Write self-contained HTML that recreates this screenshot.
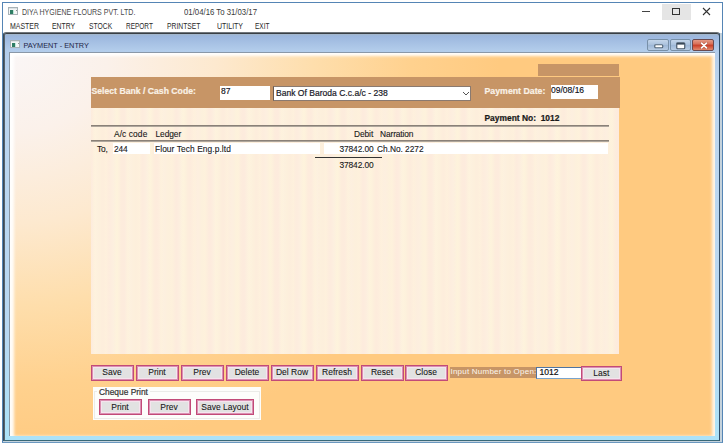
<!DOCTYPE html>
<html><head><meta charset="utf-8">
<style>
*{margin:0;padding:0;box-sizing:border-box}
html,body{width:724px;height:445px;overflow:hidden;background:#fff;font-family:"Liberation Sans",sans-serif;position:relative}
.a{position:absolute;white-space:nowrap}
.t{position:absolute;white-space:nowrap;line-height:1;-webkit-text-stroke:.2px currentColor}
/* outer window */
#ow{left:2px;top:2px;width:721px;height:441px;border:1px solid #5585b5;border-bottom-color:#6a98c0;background:#fff}
#ow2{left:3px;top:33px;width:719px;height:409px;background:#c4d2dc}
/* mdi */
#mdi{left:3px;top:32px;width:717px;height:409px;border:1px solid #70767c;border-left-color:#3a4a58;border-right-color:#2e4a66;border-bottom-color:#386878;background:linear-gradient(#a4b6c8,#a4b6c8 1px,#9cb7de 3px,#b3cdeb 18px,#bcd5ef 60px,#b8d8f2 300px,#ace2f8 405px);border-radius:3px 3px 0 0;box-shadow:inset 1px 0 0 #56626c,inset 0 1px 0 #3a3f44}
#cnt{left:9px;top:52px;width:706px;height:384px;border-left:1px solid #8a96a4;border-top:1px solid #8a98a8;overflow:hidden}
#bg{left:0;top:0;width:705px;height:383px;background:radial-gradient(ellipse 490px 405px at 0 0,#faf6f6 0%,#fbf1ea 20%,#fde9cf 42%,#fedeac 62%,#ffd18e 82%,#ffca80 100%)}
#glow{left:0;top:0;width:705px;height:383px;box-shadow:inset 4px 3px 3px rgba(255,255,255,.95),inset -3px 0 3px rgba(255,255,255,.8)}
.btn{position:absolute;height:16px;width:43px;background:#e2e2e2;border:1px solid #c24a78;box-shadow:inset 0 0 0 1px #da90b2,inset 0 0 0 2px #f6e4ee;font-size:8.5px;color:#181818;text-align:center;line-height:13.2px;-webkit-text-stroke:0.08px #181818}
.mb{position:absolute;top:39px;height:12px;border:1px solid #7890a8;border-radius:2px;background:linear-gradient(#c4d6ea,#a9c0dc 50%,#9cb6d6 51%,#b8cce4)}
</style></head><body>
<div class="a" id="ow"></div>
<div class="a" id="ow2"></div>
<!-- title -->
<svg class="a" style="left:8px;top:7px" width="10" height="8"><rect x=".5" y=".5" width="9" height="7" fill="#f4f6f6" stroke="#a8b2b6"/><rect x="1" y="1" width="8" height="1" fill="#dde2e4"/><rect x="2" y="3" width="3" height="4" fill="#2f7d64"/><rect x="5" y="3" width="1" height="4" fill="#bfe8d8"/><rect x="8" y="3" width="1" height="1" fill="#8a9490"/></svg>
<div class="t" style="left:21.7px;top:7.6px;font-size:8.4px;color:#4a4a4a;-webkit-text-stroke:0;transform:scaleX(.842);transform-origin:0 0">DIYA HYGIENE FLOURS PVT. LTD.</div>
<div class="t" style="left:184px;top:7.6px;font-size:8.4px;color:#3a3a3a;-webkit-text-stroke:0;transform:scaleX(.929);transform-origin:0 0">01/04/16 To 31/03/17</div>
<div class="a" style="left:642px;top:11px;width:8px;height:1px;background:#444"></div>
<div class="a" style="left:662px;top:4px;width:29px;height:16px;background:#e5e5e5"></div>
<div class="a" style="left:672px;top:7.5px;width:8px;height:7px;border:1px solid #333"></div>
<svg class="a" style="left:702px;top:7px" width="9" height="9"><path d="M1 1L8 8M8 1L1 8" stroke="#333" stroke-width="1.1" fill="none"/></svg>
<!-- menu -->
<div class="t" style="left:9.7px;top:22.1px;font-size:8.4px;color:#2a2a2a;-webkit-text-stroke:0;transform:scaleX(0.829);transform-origin:0 0">MASTER</div>
<div class="t" style="left:52.2px;top:22.1px;font-size:8.4px;color:#2a2a2a;-webkit-text-stroke:0;transform:scaleX(0.819);transform-origin:0 0">ENTRY</div>
<div class="t" style="left:89.4px;top:22.1px;font-size:8.4px;color:#2a2a2a;-webkit-text-stroke:0;transform:scaleX(0.806);transform-origin:0 0">STOCK</div>
<div class="t" style="left:126.1px;top:22.1px;font-size:8.4px;color:#2a2a2a;-webkit-text-stroke:0;transform:scaleX(0.772);transform-origin:0 0">REPORT</div>
<div class="t" style="left:166.7px;top:22.1px;font-size:8.4px;color:#2a2a2a;-webkit-text-stroke:0;transform:scaleX(0.806);transform-origin:0 0">PRINTSET</div>
<div class="t" style="left:216.9px;top:22.1px;font-size:8.4px;color:#2a2a2a;-webkit-text-stroke:0;transform:scaleX(0.835);transform-origin:0 0">UTILITY</div>
<div class="t" style="left:254.7px;top:22.1px;font-size:8.4px;color:#2a2a2a;-webkit-text-stroke:0;transform:scaleX(0.777);transform-origin:0 0">EXIT</div>
<!-- mdi -->
<div class="a" id="mdi"></div>
<svg class="a" style="left:10px;top:40px" width="10" height="8"><rect x=".5" y=".5" width="9" height="7" fill="#f4f6f6" stroke="#a8b2b6"/><rect x="1" y="1" width="8" height="1" fill="#dde2e4"/><rect x="2" y="3" width="3" height="4" fill="#2f7d64"/><rect x="5" y="3" width="1" height="4" fill="#bfe8d8"/><rect x="8" y="3" width="1" height="1" fill="#8a9490"/></svg>
<div class="t" style="left:23.5px;top:41.5px;font-size:7.33px;color:#1e2648;-webkit-text-stroke:0">PAYMENT - ENTRY</div>
<div class="mb" style="left:647px;width:22px"><svg class="a" style="left:5.5px;top:3.5px" width="10" height="5"><rect x=".75" y=".75" width="8" height="3" rx="1" fill="#fff" stroke="#56687a" stroke-width="1.2"/></svg></div>
<div class="mb" style="left:670px;width:21px"><svg class="a" style="left:5px;top:2px" width="10" height="8"><rect x=".75" y=".75" width="8" height="6" rx="1" fill="#fff" stroke="#4a5a6a" stroke-width="1.2"/><rect x="1" y="1" width="7.5" height="1.6" fill="#3a4a5a"/></svg></div>
<div class="mb" style="left:692px;width:22px;border-color:#6a4a50;background:linear-gradient(#e39a86,#d87058 40%,#c8402a 52%,#d45a40 70%,#e08a70)"><svg class="a" style="left:6.5px;top:2px" width="8" height="7"><path d="M1.5 1.2L6.5 5.8M6.5 1.2L1.5 5.8" stroke="#8a4438" stroke-width="2.4" fill="none" stroke-linecap="round" opacity=".6"/><path d="M1.5 1.2L6.5 5.8M6.5 1.2L1.5 5.8" stroke="#fff" stroke-width="1.6" fill="none" stroke-linecap="round"/></svg></div>
<div class="a" id="cnt">
 <div class="a" id="bg"></div>
 <div class="a" id="glow"></div>
</div>

<!-- panel (page coords) -->
<div class="a" style="left:91px;top:107px;width:528px;height:247px;background:repeating-linear-gradient(90deg,rgba(255,248,220,0) 0,rgba(255,248,220,.4) 4px,rgba(255,248,220,0) 8px,rgba(255,248,220,0) 11px),repeating-linear-gradient(90deg,#fdebdd 0,#fdefdf 5px,#fdf0dc 9px,#fdecdc 13px,#fdebdd 17px)"></div>
<div class="a" style="left:538px;top:64px;width:81px;height:12px;background:#c79566"></div>
<div class="a" style="left:91px;top:77px;width:529px;height:31px;background:#c79566"></div>
<div class="t" style="left:91.5px;top:87px;font-size:8.67px;font-weight:bold;color:#faf2e6">Select Bank / Cash Code:</div>
<div class="a" style="left:220px;top:86px;width:50px;height:14px;background:#fff"></div>
<div class="t" style="left:221px;top:86.5px;font-size:8.5px;color:#101018;-webkit-text-stroke:.15px #101018">87</div>
<div class="a" style="left:273px;top:86px;width:198px;height:14.5px;background:#fff;border:1px solid #8a7a70;border-left-color:#6a5a50"></div>
<div class="t" style="left:276px;top:88.7px;font-size:8.56px;color:#1a1a28">Bank Of Baroda C.c.a/c - 238</div>
<svg class="a" style="left:462px;top:91px" width="8" height="5"><path d="M1 1 L4 4 L7 1" fill="none" stroke="#555" stroke-width="1"/></svg>
<div class="t" style="left:484.5px;top:87px;font-size:8.78px;font-weight:bold;color:#faf2e6">Payment Date:</div>
<div class="a" style="left:550.5px;top:84.5px;width:47px;height:14.5px;background:#fff"></div>
<div class="t" style="left:551px;top:85.5px;font-size:8.5px;color:#101018;-webkit-text-stroke:.15px #101018">09/08/16</div>
<div class="t" style="left:484.5px;top:114px;font-size:8.43px;font-weight:bold;color:#1a1a1a">Payment No:&nbsp; 1012</div>
<div class="a" style="left:91px;top:125px;width:518px;height:2px;background:linear-gradient(#8a8178 50%,#aea69c 50%)"></div>
<div class="t" style="left:114px;top:130.1px;font-size:8.4px;letter-spacing:0.1px;color:#181818;-webkit-text-stroke:.1px currentColor">A/c code</div>
<div class="t" style="left:155.5px;top:130.1px;font-size:8.4px;letter-spacing:-0.08px;color:#181818;-webkit-text-stroke:.1px currentColor">Ledger</div>
<div class="t" style="left:354px;top:130.1px;font-size:8.4px;letter-spacing:-0.08px;color:#181818;-webkit-text-stroke:.1px currentColor">Debit</div>
<div class="t" style="left:380px;top:130.1px;font-size:8.4px;letter-spacing:-0.12px;color:#181818;-webkit-text-stroke:.1px currentColor">Narration</div>
<div class="a" style="left:91px;top:140px;width:518px;height:2px;background:linear-gradient(#8a8178 50%,#aea69c 50%)"></div>
<div class="t" style="left:97px;top:145.1px;font-size:8.4px;letter-spacing:-0.2px;color:#181818;-webkit-text-stroke:.1px currentColor">To,</div>
<div class="a" style="left:112.5px;top:143px;width:37px;height:11px;background:#fff"></div>
<div class="t" style="left:114px;top:145.1px;font-size:8.4px;letter-spacing:-0.2px;color:#181818;-webkit-text-stroke:.1px currentColor">244</div>
<div class="a" style="left:153.5px;top:143px;width:166px;height:11px;background:#fff"></div>
<div class="t" style="left:155px;top:145.1px;font-size:8.4px;letter-spacing:0.08px;color:#181818;-webkit-text-stroke:.1px currentColor">Flour Tech Eng.p.ltd</div>
<div class="a" style="left:323.5px;top:143px;width:52px;height:11px;background:#fff"></div>
<div class="t" style="left:339.5px;top:145.1px;font-size:8.4px;letter-spacing:-0.12px;color:#181818;-webkit-text-stroke:.1px currentColor">37842.00</div>
<div class="a" style="left:376px;top:143px;width:232px;height:11px;background:#fff"></div>
<div class="t" style="left:377px;top:145.1px;font-size:8.4px;letter-spacing:-0.04px;color:#181818;-webkit-text-stroke:.1px currentColor">Ch.No. 2272</div>
<div class="a" style="left:314.5px;top:156.5px;width:67px;height:1px;background:#333"></div>
<div class="t" style="left:339.5px;top:161.2px;font-size:8.4px;letter-spacing:-0.12px;color:#181818;-webkit-text-stroke:.1px currentColor">37842.00</div>
<!-- buttons -->
<div class="btn" style="left:90.5px;top:364.5px">Save</div>
<div class="btn" style="left:135.5px;top:364.5px">Print</div>
<div class="btn" style="left:180.5px;top:364.5px">Prev</div>
<div class="btn" style="left:225.5px;top:364.5px">Delete</div>
<div class="btn" style="left:270.5px;top:364.5px">Del Row</div>
<div class="btn" style="left:315.5px;top:364.5px">Refresh</div>
<div class="btn" style="left:360.5px;top:364.5px">Reset</div>
<div class="btn" style="left:404.5px;top:364.5px">Close</div>
<div class="a" style="left:450px;top:367px;width:86.5px;height:10.5px;background:#c79566"></div>
<div class="t" style="left:450.5px;top:368.3px;font-size:8px;letter-spacing:.22px;color:#fbf5ee;-webkit-text-stroke:0">Input Number to Open:</div>
<div class="a" style="left:536px;top:366.5px;width:45.5px;height:12.5px;background:#fff;border:1px solid #7aa4cc;border-top-color:#4f74a0;border-left-color:#4f74a0"></div>
<div class="t" style="left:539.5px;top:368px;font-size:8.6px;color:#111;-webkit-text-stroke:.2px #111">1012</div>
<div class="btn" style="left:581px;top:365.5px;width:40.5px;height:15px;line-height:12.5px">Last</div>
<div class="a" style="left:92.5px;top:386.5px;width:168px;height:33px;background:#fdfdfb"></div>
<div class="a" style="left:93.5px;top:390.5px;width:166px;height:28px;border:1px solid #ebebe8"></div>
<div class="t" style="left:97px;top:388px;font-size:8.4px;color:#333;background:#fdfdfb;padding:0 2px">Cheque Print</div>
<div class="btn" style="left:98.5px;top:399px;line-height:15.5px">Print</div>
<div class="btn" style="left:147.5px;top:399px;line-height:15.5px">Prev</div>
<div class="btn" style="left:196px;top:399px;width:58px;line-height:15.5px">Save Layout</div>
</body></html>
